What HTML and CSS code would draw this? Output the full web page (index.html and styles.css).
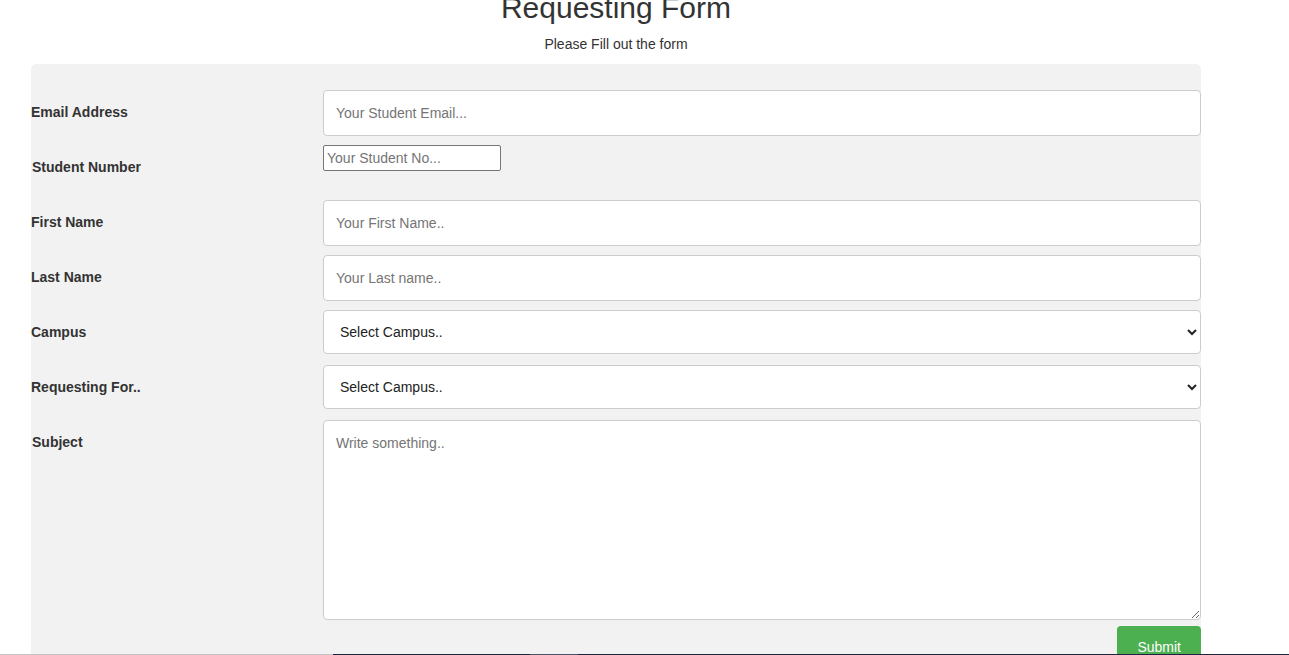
FILE: index.html
```html
<!DOCTYPE html>
<html lang="en">
<head>
<meta charset="utf-8">
<title>Requesting Form</title>
<link rel="stylesheet" href="styles.css">
</head>
<body>
<div class="page">
  <header class="head">
    <h1 class="title">Requesting Form</h1>
    <p class="subtitle">Please Fill out the form</p>
  </header>
  <form class="container">
    <div class="row">
      <div class="col-25"><label class="lbl">Email Address</label></div>
      <div class="col-75"><input class="field" type="text" placeholder="Your Student Email..."></div>
    </div>
    <div class="row">
      <div class="col-25"><label class="lbl lbl-shift">Student Number</label></div>
      <div class="col-75"><input class="plain" type="text" placeholder="Your Student No..."></div>
    </div>
    <div class="row">
      <div class="col-25"><label class="lbl">First Name</label></div>
      <div class="col-75"><input class="field" type="text" placeholder="Your First Name.."></div>
    </div>
    <div class="row">
      <div class="col-25"><label class="lbl">Last Name</label></div>
      <div class="col-75"><input class="field" type="text" placeholder="Your Last name.."></div>
    </div>
    <div class="row">
      <div class="col-25"><label class="lbl">Campus</label></div>
      <div class="col-75"><select class="field sel"><option>Select Campus..</option></select></div>
    </div>
    <div class="row">
      <div class="col-25"><label class="lbl">Requesting For..</label></div>
      <div class="col-75"><select class="field sel"><option>Select Campus..</option></select></div>
    </div>
    <div class="row row-auto">
      <div class="col-25"><label class="lbl lbl-shift">Subject</label></div>
      <div class="col-75"><textarea class="field area" placeholder="Write something.."></textarea></div>
    </div>
    <div class="row row-auto submit-row">
      <button class="submit" type="button">Submit</button>
    </div>
  </form>
</div>
<div class="footer-line">
  <span class="seg seg-gray"></span>
  <span class="seg seg-dark1"></span>
  <span class="seg seg-light"></span>
  <span class="seg seg-dark2"></span>
</div>
</body>
</html>
```

FILE: styles.css
```css
* { box-sizing: border-box; }
html, body { margin: 0; padding: 0; background: #fff; overflow: hidden; }
body {
  font-family: "Liberation Sans", Arial, sans-serif;
  font-size: 14px;
  color: #333;
}
.page {
  width: 1170px;
  margin-left: 31px;
}
.head { text-align: center; }
.title {
  margin: -9px 0 0;
  font-size: 30px;
  line-height: 34px;
  font-weight: normal;
  color: #333;
}
.subtitle {
  margin: 11px 0 0;
  font-size: 14px;
  line-height: 16px;
  color: #333;
}
.container {
  margin-top: 12px;
  background: #f2f2f2;
  border-radius: 5px;
  padding: 20px 0 40px;
}
.row {
  display: grid;
  grid-template-columns: 292px 1fr;
  align-items: start;
  height: 55px;
  padding-top: 6px;
}
.row-auto { height: auto; }
.lbl {
  display: inline-block;
  padding: 12px 12px 12px 0;
  line-height: 20px;
  font-weight: bold;
  font-size: 14px;
  color: #333;
}
.lbl-shift { padding-left: 1px; }
.field {
  display: block;
  width: 100%;
  height: 46px;
  padding: 12px;
  border: 1px solid #ccc;
  border-radius: 4px;
  font-family: "Liberation Sans", Arial, sans-serif;
  font-size: 14px;
  color: #333;
  background: #fff;
}
.field::placeholder { color: #757575; }
.sel { height: 44px; color: #222; }
.area {
  height: 200px;
  padding-top: 14px;
  resize: vertical;
}
.plain {
  display: block;
  width: 178px;
  height: 26px;
  padding: 1px 3px;
  border: 1px solid #767676;
  border-radius: 2px;
  font-family: "Liberation Sans", Arial, sans-serif;
  font-size: 14px;
  background: #fff;
}
.plain::placeholder { color: #757575; }
.submit-row {
  display: flex;
  justify-content: flex-end;
}
.submit {
  background: #4caf50;
  color: #fff;
  border: none;
  border-radius: 4px;
  padding: 12px 20px;
  font-family: "Liberation Sans", Arial, sans-serif;
  font-size: 14px;
  line-height: 18px;
}
.footer-line {
  position: absolute;
  left: 0;
  right: 0;
  top: 654px;
  height: 1px;
  display: flex;
}
.seg { display: block; height: 1px; }
.seg-gray { width: 333px; background: #c4c4c4; }
.seg-dark1 { width: 197px; background: #1d2440; }
.seg-light { width: 48px; background: #4c5268; }
.seg-dark2 { flex: 1; background: #1d2440; }
```
